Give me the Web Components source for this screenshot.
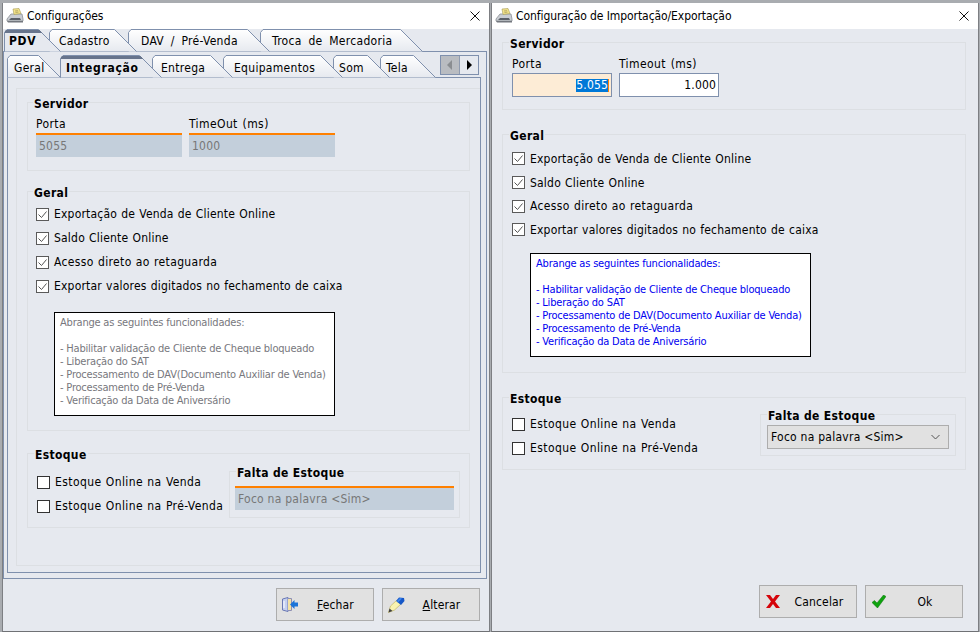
<!DOCTYPE html>
<html lang="pt-BR">
<head>
<meta charset="utf-8">
<title>Configurações</title>
<style>
  html, body { margin: 0; height: 100%; background: #a9acb0; overflow: hidden; }
  body {
    display: flex;
    align-items: stretch;
    font: 12px "DejaVu Sans Condensed", "DejaVu Sans", sans-serif;
    color: #000;
  }
  .stack { display: flex; flex-direction: column; }
  .row { display: flex; }
  .checks { display: flex; flex-direction: column; }
</style>
</head>
<body>

<x-window title="Configurações" style="margin-left:2px;width:488px">
  <x-tabs class="outer" style="--tab-top:5px">
    <x-tab selected w="57" tx="5" style="z-index:9">PDV</x-tab>
    <x-tab w="88" tx="10" ml="-12" style="z-index:8">Cadastro</x-tab>
    <x-tab w="142" tx="13" ml="-9" style="z-index:7">DAV / Pré-Venda</x-tab>
    <x-tab w="163" tx="12" ml="-10" style="z-index:6">Troca de Mercadoria</x-tab>
  </x-tabs>
  <x-panel pad="3px 5px 5px 3px" style="height:528px;margin-right:2px">
    <x-tabs style="--tab-top:6px">
      <x-tab w="54" tx="7" style="z-index:9">Geral</x-tab>
      <x-tab selected w="102" tx="6" ml="-1" style="z-index:10">Integração</x-tab>
      <x-tab w="81" tx="9" ml="-10" style="z-index:7">Entrega</x-tab>
      <x-tab w="120" tx="11" ml="-10" style="z-index:6">Equipamentos</x-tab>
      <x-tab w="57" tx="6" ml="-10" style="z-index:5">Som</x-tab>
      <x-tab w="56" tx="6" ml="-10" style="z-index:4">Tela</x-tab>
      <x-scroller></x-scroller>
    </x-tabs>
    <x-panel pad="10px 0 6px 8px" style="height:496px">
      <x-inset>
        <x-group label="Servidor" style="--legend-x:5px;margin-top:13px;height:69px;width:443px">
          <div class="row" style="gap:7px;margin-left:8px">
            <x-field label="Porta" style="width:146px">5055</x-field>
            <x-field label="TimeOut (ms)" style="width:146px">1000</x-field>
          </div>
        </x-group>
        <x-group label="Geral" style="--legend-x:5px;margin-top:20px;height:240px;width:443px">
          <div class="checks" style="margin:3px 0 0 8px">
            <x-check checked>Exportação de Venda de Cliente Online</x-check>
            <x-check checked>Saldo Cliente Online</x-check>
            <x-check checked style="--check-ls:.35px">Acesso direto ao retaguarda</x-check>
            <x-check checked>Exportar valores digitados no fechamento de caixa</x-check>
          </div>
          <x-note tone="gray" style="margin:14px 0 0 26px">Abrange as seguintes funcionalidades:

- Habilitar validação de Cliente de Cheque bloqueado
- Liberação do SAT
- Processamento de DAV(Documento Auxiliar de Venda)
- Processamento de Pré-Venda
- Verificação da Data de Aniversário</x-note>
        </x-group>
        <x-group label="Estoque" style="margin-top:22px;height:75px;width:443px">
          <div class="row" style="margin-left:9px">
            <div class="checks" style="--check-ls:.4px;margin-top:9px;width:192px">
              <x-check>Estoque Online na Venda</x-check>
              <x-check>Estoque Online na Pré-Venda</x-check>
            </div>
            <x-group label="Falta de Estoque" style="margin-top:10px;height:47px;width:231px">
              <x-field style="width:219px;margin:7px 0 0 5px">Foco na palavra &lt;Sim&gt;</x-field>
            </x-group>
          </div>
        </x-group>
      </x-inset>
    </x-panel>
  </x-panel>
  <x-footer>
    <x-btn icon="door" key="F" rest="echar"></x-btn>
    <x-btn icon="pencil" key="A" rest="lterar"></x-btn>
  </x-footer>
</x-window>

<x-window title="Configuração de Importação/Exportação" style="margin-left:1px;width:488px">
  <div style="padding:0 0 0 10px">
    <x-group label="Servidor" style="margin-top:13px;height:68px;width:464px">
      <div class="row" style="gap:7px;margin-left:9px">
        <div class="stack" style="width:100px">
          <x-label>Porta</x-label>
          <x-input focused>5.055</x-input>
        </div>
        <div class="stack" style="width:100px">
          <x-label>Timeout (ms)</x-label>
          <x-input>1.000</x-input>
        </div>
      </div>
    </x-group>
    <x-group label="Geral" style="margin-top:24px;height:239px;width:464px">
      <div class="checks" style="margin:5px 0 0 9px;--check-h:23.7px">
        <x-check checked>Exportação de Venda de Cliente Online</x-check>
        <x-check checked>Saldo Cliente Online</x-check>
        <x-check checked style="--check-ls:.35px">Acesso direto ao retaguarda</x-check>
        <x-check checked>Exportar valores digitados no fechamento de caixa</x-check>
      </div>
      <x-note tone="blue" style="margin:11px 0 0 27px">Abrange as seguintes funcionalidades:

- Habilitar validação de Cliente de Cheque bloqueado
- Liberação do SAT
- Processamento de DAV(Documento Auxiliar de Venda)
- Processamento de Pré-Venda
- Verificação da Data de Aniversário</x-note>
    </x-group>
    <x-group label="Estoque" style="margin-top:24px;height:73px;width:464px">
      <div class="row" style="margin-left:9px">
        <div class="checks" style="--check-ls:.4px;margin-top:7px;width:248px">
          <x-check>Estoque Online na Venda</x-check>
          <x-check>Estoque Online na Pré-Venda</x-check>
        </div>
        <x-group label="Falta de Estoque" style="margin-top:9px;height:42px;width:196px">
          <x-select style="margin:3px 0 0 6px;width:182px">Foco na palavra &lt;Sim&gt;</x-select>
        </x-group>
      </div>
    </x-group>
  </div>
  <x-footer class="grow" style="margin-top:auto;height:46px;padding-right:15px">
    <x-btn icon="cancel" label="Cancelar" style="padding-left:6px"></x-btn>
    <x-btn icon="ok" label="Ok" style="padding-left:6px"></x-btn>
  </x-footer>
</x-window>

<script>
const ICONS = {
  register: `<svg width="18" height="16" viewBox="0 0 18 16"><path d="M1 11 5 6h11l1 5v2H1z" fill="#c9cdd3" stroke="#8b8f96" stroke-width=".8"/><path d="M5 10h9l1 2H3z" fill="#5b6068"/><path d="M7 1l6-.5 2 5-7 1z" fill="#f3e38a" stroke="#a59a55" stroke-width=".6"/><path d="M9 3l3-.3M9.500 4.500l3-.4" stroke="#8f8750" stroke-width=".6"/><path d="M1 13h16v1.500H2z" fill="#73777e"/></svg>`,
  door: `<svg width="16" height="15" viewBox="0 0 16 15"><path d="M.5 2 6 .5v14L.5 13z" fill="#c5d0f0" stroke="#6a78b4"/><path d="M6 1.500h3.500v12H6" fill="#f3e2a6" stroke="#8d8fb5"/><path d="M2 4v7" stroke="#fff"/><path d="M16 5.500h-3.500V3L8 7.500l4.500 4.500V9.500H16z" fill="#1c74d8"/></svg>`,
  pencil: `<svg width="17" height="16" viewBox="0 0 17 16"><path d="M.5 15.500 2.500 9 9 3l4 4-6.500 6z" fill="#f8f3b0" stroke="#b9ac55" stroke-width=".6"/><path d="M8 4l3-3.500 5 .5.500 3L13 8z" fill="#1557c8"/><path d="M9 4l3-3 2 .5-4 4z" fill="#3d86ee"/><path d="M.5 15.500l1-4 3 2.500z" fill="#3f3f3f"/></svg>`,
  cancel: `<svg width="14" height="13" viewBox="0 0 14 13"><path d="M0 0h4l3 4 3-4h4L9 6.500 14 13h-4L7 9l-3 4H0l5-6.500z" fill="#d5040a"/></svg>`,
  ok: `<svg width="14" height="13" viewBox="0 0 14 13"><path d="M0 7.500 2.500 5.500 5 8 11.500 0 14 1.500 5.500 13z" fill="#0fa30f" stroke="#0a730a" stroke-width=".5"/></svg>`
};

class XWindow extends HTMLElement {
  connectedCallback() {
    if (this.shadowRoot) return;
    this.attachShadow({ mode: 'open' }).innerHTML = `
      <style>
        :host { display: flex; flex-direction: column; box-sizing: border-box; margin-top: 3px; height: 629px;
          background: #e6e9ef; border-left: 1px solid #7d7f83; border-right: 1px solid #7d7f83; border-bottom: 1px solid #6f7175; }
        .bar { height: 26px; flex: none; background: #fff; display: flex; align-items: center; padding-left: 3px; }
        .name { margin-left: 3px; letter-spacing: -.08px; }
        .close { margin-left: auto; margin-right: 9px; display: flex; }
      </style>
      <div class="bar">${ICONS.register}<span class="name">${this.getAttribute('title')}</span>
        <span class="close"><svg width="10" height="10" viewBox="0 0 10 10"><path d="M.5.5l9 9M9.500.5l-9 9" stroke="#111" fill="none"/></svg></span></div>
      <slot></slot>`;
    this.removeAttribute('title');
  }
}

class XTabs extends HTMLElement {
  connectedCallback() {
    this.attachShadow({ mode: 'open' }).innerHTML = `
      <style>
        :host { display: flex; height: 22px; position: relative; z-index: 2; }
        :host(.outer) { margin-left: 1px; }
      </style><slot></slot>`;
  }
}

class XTab extends HTMLElement {
  connectedCallback() {
    const w = +this.getAttribute('w');
    const sel = this.hasAttribute('selected');
    const id = 'g' + Math.random().toString(36).slice(2);
    const d = `M.5 22.500V3.500L3 .5H${w - 22.5}L${w - .5} 22.500`;
    this.attachShadow({ mode: 'open' }).innerHTML = `
      <style>
        :host { display: block; position: relative; flex: none; width: ${w}px; height: 23px; margin-left: ${this.getAttribute('ml') || 0}px; }
        svg { position: absolute; left: 0; top: 0; }
        span { position: absolute; left: ${this.getAttribute('tx')}px; top: var(--tab-top, 5px); line-height: 15px; white-space: nowrap;
          font-weight: ${sel ? 700 : 400}; letter-spacing: ${sel ? .7 : .3}px; word-spacing: 3px; }
      </style>
      <svg width="${w}" height="23"><defs><linearGradient id="${id}" x2="0" y2="1"><stop offset="0" stop-color="#fff"/><stop offset="1" stop-color="#e6e9ef"/></linearGradient></defs>
        <path d="${d}" fill="${sel ? '#e6e9ef' : `url(#${id})`}" stroke="#7f90ad"/>
        ${sel ? `<path d="M2 1.500H${w - 21.500}L${w - 19.500} 3.500H1z" fill="#67748c" stroke="#67748c" stroke-width="1"/>` : ''}
      </svg><span><slot></slot></span>`;
  }
}

class XScroller extends HTMLElement {
  connectedCallback() {
    this.attachShadow({ mode: 'open' }).innerHTML = `
      <style>
        :host { position: absolute; right: 2px; top: 0; display: flex; box-sizing: border-box; width: 39px; height: 20px; border: 1px solid #7f90ad; }
        div { flex: 1; display: flex; align-items: center; justify-content: center; }
        .off { background: #b9bcc1; border-right: 1px solid #8f9bb0; }
        .on { background: #e6e9ef; }
      </style>
      <div class="off"><svg width="6" height="10"><path d="M5 0v10L0 5z" fill="#8a8d91"/></svg></div>
      <div class="on"><svg width="6" height="10"><path d="M1 0v10l5-5z" fill="#000"/></svg></div>`;
  }
}

class XPanel extends HTMLElement {
  connectedCallback() {
    this.attachShadow({ mode: 'open' }).innerHTML = `
      <style>
        :host { display: block; box-sizing: border-box; border: 1px solid #7f90ad; padding: ${this.getAttribute('pad')}; background: #e6e9ef; }
      </style><slot></slot>`;
  }
}

class XInset extends HTMLElement {
  connectedCallback() {
    this.attachShadow({ mode: 'open' }).innerHTML = `
      <style>
        :host { display: block; box-sizing: border-box; height: 478px; border: 1px solid #dcdfe3; border-right: 0; padding-left: 10px; overflow: hidden; }
      </style><slot></slot>`;
  }
}

class XGroup extends HTMLElement {
  connectedCallback() {
    this.attachShadow({ mode: 'open' }).innerHTML = `
      <style>
        :host { display: block; box-sizing: border-box; border: 1px solid #dcdfe3; flex: none; }
        .legend { display: inline-block; margin: -6px 0 0 var(--legend-x, 6px); padding: 0 1px; background: #e6e9ef; font-weight: 700; line-height: 15px; vertical-align: top; letter-spacing: .35px; }
        .body { margin-top: -7px; --legend-x: 6px; }
      </style>
      <div class="legend">${this.getAttribute('label')}</div>
      <div class="body"><slot></slot></div>`;
  }
}

class XField extends HTMLElement {
  connectedCallback() {
    const label = this.getAttribute('label');
    this.attachShadow({ mode: 'open' }).innerHTML = `
      <style>
        :host { display: block; }
        .label { line-height: 15px; margin: 7px 0 1px; letter-spacing: .4px; word-spacing: 1px; }
        .box { box-sizing: border-box; height: 24px; border-top: 2px solid #ff8000; background: #c3cfdb; color: #777; padding: 2px 0 0 3px; line-height: 18px; letter-spacing: .25px; }
      </style>
      ${label ? `<div class="label">${label}</div>` : ''}
      <div class="box"><slot></slot></div>`;
  }
}

class XLabel extends HTMLElement {
  connectedCallback() {
    this.attachShadow({ mode: 'open' }).innerHTML = `
      <style>:host { display: block; line-height: 15px; margin: 7px 0 1px; letter-spacing: .4px; word-spacing: 1px; }</style><slot></slot>`;
  }
}

class XInput extends HTMLElement {
  connectedCallback() {
    const foc = this.hasAttribute('focused');
    this.attachShadow({ mode: 'open' }).innerHTML = `
      <style>
        :host { display: flex; justify-content: flex-end; align-items: center; box-sizing: border-box; height: 24px; border: 1px solid #7f90ad; background: ${foc ? '#fdecd6' : '#fff'}; padding: 0 2px 0 0; letter-spacing: .15px; }
        span { line-height: 13px; ${foc ? 'background:#0078d7;color:#fff;border-right:1px solid #ff8000;' : ''} }
      </style><span><slot></slot></span>`;
  }
}

class XSelect extends HTMLElement {
  connectedCallback() {
    this.attachShadow({ mode: 'open' }).innerHTML = `
      <style>
        :host { display: flex; align-items: center; box-sizing: border-box; height: 24px; border: 1px solid #adadad; background: #e1e1e1; padding: 0 8px 0 3px; letter-spacing: .25px; }
        svg { margin-left: auto; }
      </style><slot></slot>
      <svg width="9" height="6"><path d="M.5 1l4 4 4-4" stroke="#555" fill="none"/></svg>`;
  }
}

class XCheck extends HTMLElement {
  connectedCallback() {
    const on = this.hasAttribute('checked');
    this.attachShadow({ mode: 'open' }).innerHTML = `
      <style>
        :host { display: flex; align-items: center; height: var(--check-h, 24px); white-space: nowrap; letter-spacing: var(--check-ls, .2px); word-spacing: .5px; }
        svg { flex: none; margin-right: 5px; }
      </style>
      <svg width="13" height="13"><rect x=".5" y=".5" width="12" height="12" fill="#fff" stroke="${on ? '#5a5a5a' : '#333'}"/>
      ${on ? '<path d="M2.500 6.500l3 3 5-6" fill="none" stroke="#555" stroke-width="1"/>' : ''}</svg><slot></slot>`;
  }
}

class XNote extends HTMLElement {
  connectedCallback() {
    const blue = this.getAttribute('tone') === 'blue';
    // pre-line keeps the line breaks of the slotted text, so no whitespace may lead the shadow root
    this.attachShadow({ mode: 'open' }).innerHTML = `<style>
        :host { display: block; box-sizing: border-box; width: 281px; height: 104px; border: 1px solid #000; background: #fff; padding: 3px 0 0 5px;
          color: ${blue ? '#0000f0' : '#77777d'}; font: 11px/13px "DejaVu Sans Condensed", "DejaVu Sans", sans-serif; white-space: pre-line; letter-spacing: -.2px; }
      </style><slot></slot>`;
  }
}

class XFooter extends HTMLElement {
  connectedCallback() {
    this.attachShadow({ mode: 'open' }).innerHTML = `
      <style>
        :host { display: flex; justify-content: flex-end; gap: 8px; padding: 9px 9px 0 0; flex: none; }
      </style><slot></slot>`;
  }
}

class XBtn extends HTMLElement {
  connectedCallback() {
    const key = this.getAttribute('key');
    const text = key ? `<u>${key}</u>${this.getAttribute('rest')}` : this.getAttribute('label');
    this.attachShadow({ mode: 'open' }).innerHTML = `
      <style>
        :host { display: flex; align-items: center; box-sizing: border-box; width: 98px; height: 33px; border: 1px solid #adadad; background: #e1e1e1; padding-left: 5px; }
        .ic { width: 24px; display: flex; flex: none; }
        .tx { flex: 1; text-align: center; letter-spacing: .15px; padding-right: 8px; }
      </style>
      <span class="ic">${ICONS[this.getAttribute('icon')]}</span><span class="tx">${text}</span>`;
  }
}

customElements.define('x-window', XWindow);
customElements.define('x-tabs', XTabs);
customElements.define('x-tab', XTab);
customElements.define('x-scroller', XScroller);
customElements.define('x-panel', XPanel);
customElements.define('x-inset', XInset);
customElements.define('x-group', XGroup);
customElements.define('x-field', XField);
customElements.define('x-label', XLabel);
customElements.define('x-input', XInput);
customElements.define('x-select', XSelect);
customElements.define('x-check', XCheck);
customElements.define('x-note', XNote);
customElements.define('x-footer', XFooter);
customElements.define('x-btn', XBtn);
</script>
</body>
</html>
